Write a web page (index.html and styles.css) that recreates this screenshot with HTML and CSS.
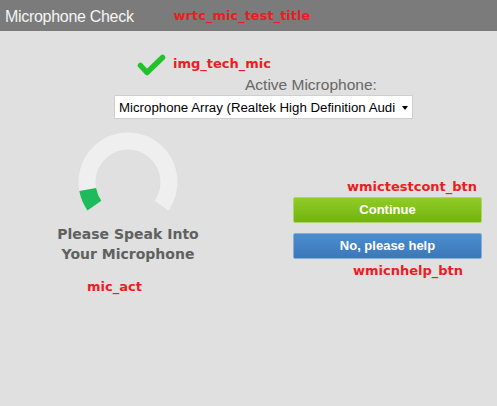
FILE: index.html
```html
<!DOCTYPE html>
<html lang="en">
<head>
<meta charset="utf-8">
<title>Microphone Check</title>
<link rel="stylesheet" href="styles.css">
</head>
<body>
<header class="titlebar">
  <span class="title">Microphone Check</span>
  <span class="tag tag-title">wrtc_mic_test_title</span>
</header>
<main class="main">
  <section class="device">
    <div class="check-row">
      <svg class="check" width="30" height="22" viewBox="0 0 30 22" aria-hidden="true">
        <path d="M4.5 11.5 L11 18.5 L26.5 3.5" fill="none" stroke="#22c22a" stroke-width="5.5" stroke-linecap="round" stroke-linejoin="round"/>
      </svg>
      <span class="tag tag-check">img_tech_mic</span>
    </div>
    <div class="active-label">Active Microphone:</div>
    <div class="select">
      <span class="select-text">Microphone Array (Realtek High Definition Audi</span>
      <span class="select-arrow"></span>
    </div>
  </section>
  <section class="test">
    <div class="meter-col">
      <svg class="meter" width="110" height="90" viewBox="0 0 110 90" aria-hidden="true">
        <path d="M21.415 77.517 A41 41 0 1 1 88.585 77.517" fill="none" stroke="#efefef" stroke-width="17"/>
        <path d="M21.415 77.517 A41 41 0 0 1 14.684 61.47" fill="none" stroke="#1dbb5b" stroke-width="17"/>
      </svg>
      <div class="speak">Please Speak Into<br>Your Microphone</div>
      <div class="tag tag-act">mic_act</div>
    </div>
    <div class="btn-col">
      <div class="tag tag-cont">wmictestcont_btn</div>
      <button class="btn btn-green">Continue</button>
      <button class="btn btn-blue">No, please help</button>
      <div class="tag tag-help">wmicnhelp_btn</div>
    </div>
  </section>
</main>
</body>
</html>
```
FILE: styles.css
```css
* { box-sizing: border-box; }
html, body { margin: 0; padding: 0; }
body {
  background: #dfe0df;
  width: 497px;
  height: 406px;
  overflow: hidden;
  font-family: "Liberation Sans", Arial, sans-serif;
}
.titlebar {
  height: 31px;
  background: #7b7b7b;
  display: flex;
  align-items: flex-start;
  padding: 7.5px 0 0 5px;
}
.title {
  color: #f4f5f6;
  font-size: 16px;
  letter-spacing: -0.3px;
  line-height: 18px;
}
.tag {
  font-family: "DejaVu Sans", Verdana, sans-serif;
  font-weight: bold;
  font-size: 13px;
  line-height: 16px;
  color: #ec1c24;
  white-space: nowrap;
}
.tag-title { margin-left: 40px; }
.device {
  margin: 23px 0 0 114px;
  width: 299px;
}
.check-row {
  display: flex;
  align-items: flex-start;
  height: 22px;
  padding-left: 22px;
}
.check { display: block; }
.tag-check { margin: 2px 0 0 7px; }
.active-label {
  padding-left: 131px;
  font-size: 15.5px;
  line-height: 18px;
  color: #676767;
  white-space: nowrap;
}
.select {
  margin-top: 1px;
  height: 24px;
  background: #fff;
  border: 1px solid #cfcfcf;
  display: flex;
  align-items: center;
  padding: 0 4px 0 4px;
}
.select-text {
  flex: 1;
  overflow: hidden;
  white-space: nowrap;
  font-size: 13.25px;
  line-height: 20px;
  padding-top: 1px;
  color: #000;
}
.select-arrow {
  width: 0;
  height: 0;
  border-left: 3.5px solid transparent;
  border-right: 3.5px solid transparent;
  border-top: 4px solid #000;
  margin: 1px 0 0 6px;
}
.test {
  display: flex;
  margin-top: 9px;
  padding-left: 28px;
  gap: 65px;
}
.meter-col {
  width: 200px;
  display: flex;
  flex-direction: column;
  align-items: center;
}
.meter { display: block; }
.speak {
  margin-top: 6px;
  font-family: "DejaVu Sans", Verdana, sans-serif;
  font-weight: bold;
  font-size: 14px;
  line-height: 20px;
  color: #5f6060;
  text-align: center;
}
.tag-act {
  align-self: flex-start;
  margin: 15px 0 0 59px;
}
.btn-col {
  width: 189px;
  padding-top: 51px;
  display: flex;
  flex-direction: column;
}
.tag-cont { padding-left: 54px; }
.btn {
  display: block;
  width: 189px;
  height: 26px;
  margin: 0;
  padding: 0;
  border-radius: 2px;
  font-family: "Liberation Sans", Arial, sans-serif;
  font-weight: bold;
  font-size: 13px;
  line-height: 24px;
  color: #fff;
  text-align: center;
}
.btn-green {
  margin-top: 2px;
  border: 1px solid #abd566;
  background: linear-gradient(#91cc27, #72b30f);
}
.btn-blue {
  margin-top: 10px;
  border: 1px solid #86afd8;
  background: linear-gradient(#4b8dcc, #3b78bb);
}
.tag-help { margin-top: 4px; padding-left: 60px; }
```
